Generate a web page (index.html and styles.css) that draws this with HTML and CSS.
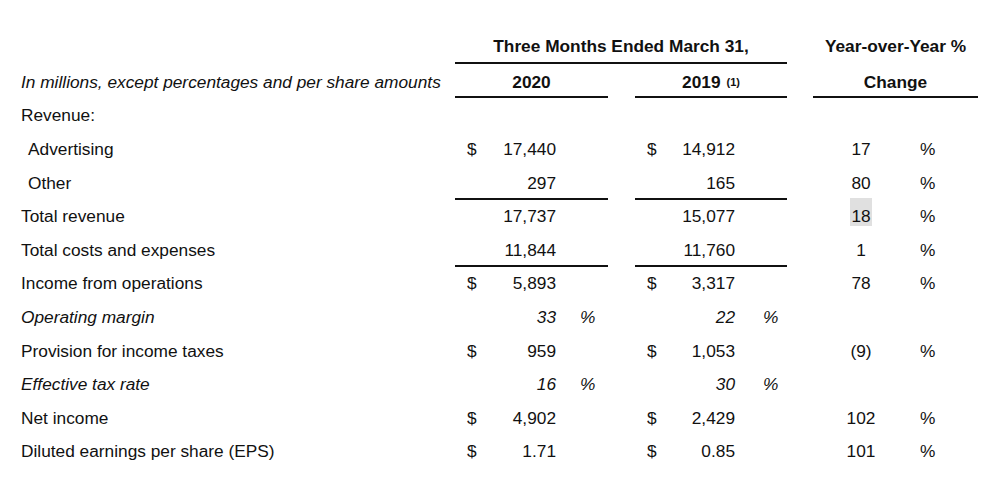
FILE: index.html
```html
<!DOCTYPE html>
<html lang="en">
<head>
<meta charset="utf-8">
<title>Financial summary</title>
<link rel="stylesheet" href="styles.css">
</head>
<body>
<div class="sheet">
  <div class="row head1">
    <div class="cell"></div>
    <div class="cell ctr bold ul span3">Three Months Ended March 31,</div>
    <div class="cell ctr bold c3">Year-over-Year %</div>
  </div>
  <div class="row head2">
    <div class="cell lbl it">In millions, except percentages and per share amounts</div>
    <div class="cell ctr bold ul">2020</div>
    <div class="cell"></div>
    <div class="cell ctr bold ul">2019<sup class="fn">(1)</sup></div>
    <div class="cell"></div>
    <div class="cell ctr bold ul">Change</div>
  </div>

  <div class="body">
    <div class="row">
      <div class="cell lbl">Revenue:</div>
    </div>

    <div class="row">
      <div class="cell lbl ind">Advertising</div>
      <div class="cell v"><span class="amt"><span class="cur">$</span><span>17,440</span></span><span class="pct"></span></div>
      <div class="cell"></div>
      <div class="cell v b"><span class="amt"><span class="cur">$</span><span>14,912</span></span><span class="pct"></span></div>
      <div class="cell"></div>
      <div class="cell chg"><span class="cn">17</span><span class="cp">%</span></div>
    </div>

    <div class="row">
      <div class="cell lbl ind">Other</div>
      <div class="cell v ul"><span class="amt"><span>297</span></span><span class="pct"></span></div>
      <div class="cell"></div>
      <div class="cell v b ul"><span class="amt"><span>165</span></span><span class="pct"></span></div>
      <div class="cell"></div>
      <div class="cell chg"><span class="cn">80</span><span class="cp">%</span></div>
    </div>

    <div class="row">
      <div class="cell lbl">Total revenue</div>
      <div class="cell v"><span class="amt"><span>17,737</span></span><span class="pct"></span></div>
      <div class="cell"></div>
      <div class="cell v b"><span class="amt"><span>15,077</span></span><span class="pct"></span></div>
      <div class="cell"></div>
      <div class="cell chg"><span class="cn"><span class="hl">18</span></span><span class="cp">%</span></div>
    </div>

    <div class="row">
      <div class="cell lbl">Total costs and expenses</div>
      <div class="cell v ul"><span class="amt"><span>11,844</span></span><span class="pct"></span></div>
      <div class="cell"></div>
      <div class="cell v b ul"><span class="amt"><span>11,760</span></span><span class="pct"></span></div>
      <div class="cell"></div>
      <div class="cell chg"><span class="cn">1</span><span class="cp">%</span></div>
    </div>

    <div class="row">
      <div class="cell lbl">Income from operations</div>
      <div class="cell v"><span class="amt"><span class="cur">$</span><span>5,893</span></span><span class="pct"></span></div>
      <div class="cell"></div>
      <div class="cell v b"><span class="amt"><span class="cur">$</span><span>3,317</span></span><span class="pct"></span></div>
      <div class="cell"></div>
      <div class="cell chg"><span class="cn">78</span><span class="cp">%</span></div>
    </div>

    <div class="row it">
      <div class="cell lbl">Operating margin</div>
      <div class="cell v"><span class="amt"><span>33</span></span><span class="pct">%</span></div>
      <div class="cell"></div>
      <div class="cell v b"><span class="amt"><span>22</span></span><span class="pct">%</span></div>
      <div class="cell"></div>
      <div class="cell chg"></div>
    </div>

    <div class="row">
      <div class="cell lbl">Provision for income taxes</div>
      <div class="cell v"><span class="amt"><span class="cur">$</span><span>959</span></span><span class="pct"></span></div>
      <div class="cell"></div>
      <div class="cell v b"><span class="amt"><span class="cur">$</span><span>1,053</span></span><span class="pct"></span></div>
      <div class="cell"></div>
      <div class="cell chg"><span class="cn">(9)</span><span class="cp">%</span></div>
    </div>

    <div class="row it">
      <div class="cell lbl">Effective tax rate</div>
      <div class="cell v"><span class="amt"><span>16</span></span><span class="pct">%</span></div>
      <div class="cell"></div>
      <div class="cell v b"><span class="amt"><span>30</span></span><span class="pct">%</span></div>
      <div class="cell"></div>
      <div class="cell chg"></div>
    </div>

    <div class="row">
      <div class="cell lbl">Net income</div>
      <div class="cell v"><span class="amt"><span class="cur">$</span><span>4,902</span></span><span class="pct"></span></div>
      <div class="cell"></div>
      <div class="cell v b"><span class="amt"><span class="cur">$</span><span>2,429</span></span><span class="pct"></span></div>
      <div class="cell"></div>
      <div class="cell chg"><span class="cn">102</span><span class="cp">%</span></div>
    </div>

    <div class="row">
      <div class="cell lbl">Diluted earnings per share (EPS)</div>
      <div class="cell v"><span class="amt"><span class="cur">$</span><span>1.71</span></span><span class="pct"></span></div>
      <div class="cell"></div>
      <div class="cell v b"><span class="amt"><span class="cur">$</span><span>0.85</span></span><span class="pct"></span></div>
      <div class="cell"></div>
      <div class="cell chg"><span class="cn">101</span><span class="cp">%</span></div>
    </div>
  </div>
</div>
</body>
</html>
```

FILE: styles.css
```css
html, body {
  margin: 0;
  padding: 0;
  background: #ffffff;
}

body {
  font-family: "Liberation Sans", Arial, sans-serif;
  font-size: 17.3px;
  color: #111111;
}

.sheet {
  padding: 30px 0 0 21px;
}

.row {
  display: grid;
  grid-template-columns: 434px 153px 27px 152px 26px 165px;
}

.cell {
  box-sizing: border-box;
  display: flex;
  align-items: center;
  border-bottom: 2px solid transparent;
  white-space: nowrap;
  min-width: 0;
}

.head1 .cell {
  height: 34px;
}

.head2 .cell {
  height: 34px;
  padding-top: 4px;
}

.span3 {
  grid-column: 2 / 5;
}

.c3 {
  grid-column: 6 / 7;
}

.ctr {
  justify-content: center;
}

.bold {
  font-weight: bold;
}

.it {
  font-style: italic;
}

.ul {
  border-bottom-color: #111111;
}

.fn {
  font-size: 11px;
  vertical-align: 8px;
  line-height: 0;
  margin-left: 6px;
}

.body {
  margin-top: 1.2px;
}

.body .row {
  height: 33.6px;
}

.body .cell {
  padding-top: 2px;
}

.ind {
  padding-left: 7px;
}

/* value cells */
.v {
  display: grid;
  grid-template-columns: 101px 1fr;
  align-items: center;
}

.v.b {
  grid-template-columns: 100px 1fr;
}

.amt {
  display: flex;
  justify-content: flex-end;
  padding-left: 12px;
}

.cur {
  margin-right: auto;
}

.pct {
  padding-left: 24px;
}

.v.b .pct {
  padding-left: 28px;
}

/* change column */
.chg {
  display: grid;
  grid-template-columns: 96px 1fr;
  align-items: center;
}

.cn {
  text-align: center;
}

.cp {
  padding-left: 11px;
}

.hl {
  display: inline-block;
  background: #e0e0e0;
  padding: 8px 1px 0 1px;
  margin-top: -8px;
  line-height: 20px;
}
```
